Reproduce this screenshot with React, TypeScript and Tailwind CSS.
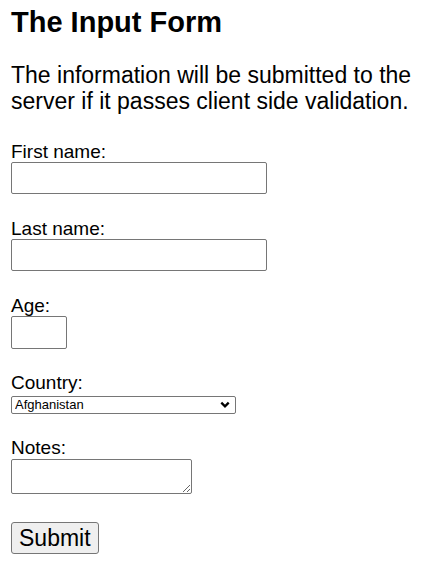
import { useState } from "react";

const countries = ["Afghanistan", "Albania", "Algeria", "Andorra", "Angola", "Argentina", "Armenia", "Australia", "Austria"];

export default function App() {
  const [country, setCountry] = useState("Afghanistan");

  return (
    <div className="min-h-[584px] bg-white text-black pl-[11px] pt-[5px]" style={{ fontFamily: '"Liberation Sans", Arial, sans-serif' }}>
      <h1 className="text-[29px] leading-[34px] font-bold">The Input Form</h1>
      <p className="mt-[23px] text-[23px] leading-[26px]">
        The information will be submitted to the server if it passes client side validation.
      </p>

      <form className="mt-[27px]" onSubmit={(e) => e.preventDefault()}>
        <label htmlFor="first" className="block text-[19px] leading-[21px]">First name:</label>
        <input id="first" type="text" className="block w-[256px] h-[32px] border border-[#767676] rounded-[2px] bg-white px-1 text-[18px]" />

        <label htmlFor="last" className="mt-[24px] block text-[19px] leading-[21px]">Last name:</label>
        <input id="last" type="text" className="block w-[256px] h-[32px] border border-[#767676] rounded-[2px] bg-white px-1 text-[18px]" />

        <label htmlFor="age" className="mt-[24px] block text-[19px] leading-[21px]">Age:</label>
        <input id="age" type="text" className="block w-[56px] h-[33px] border border-[#767676] rounded-[2px] bg-white px-1 text-[18px]" />

        <label htmlFor="country" className="mt-[23px] block text-[19px] leading-[21px]">Country:</label>
        <div className="relative mt-[3px] w-[225px]">
          <select
            id="country"
            value={country}
            onChange={(e) => setCountry(e.target.value)}
            className="block w-full h-[18px] appearance-none border border-[#767676] rounded-[2px] bg-white pl-[3px] text-[13px] leading-[16px]"
          >
            {countries.map((c) => (
              <option key={c}>{c}</option>
            ))}
          </select>
          <svg className="absolute right-[6px] top-[5px] pointer-events-none" width="10" height="8" viewBox="0 0 10 8">
            <path d="M1.3 1.6 L5 5.3 L8.7 1.6" fill="none" stroke="#000" strokeWidth="2.3" />
          </svg>
        </div>

        <label htmlFor="notes" className="mt-[23px] block text-[19px] leading-[21px]">Notes:</label>
        <textarea id="notes" className="mt-[1px] block w-[181px] h-[35px] border border-[#767676] rounded-[2px] bg-white text-[13px]" />

        <button type="submit" className="mt-[28px] block h-[32px] px-[7px] border border-[#767676] rounded-[3px] bg-[#efefef] text-[23px] leading-[26px]">
          Submit
        </button>
      </form>
    </div>
  );
}
